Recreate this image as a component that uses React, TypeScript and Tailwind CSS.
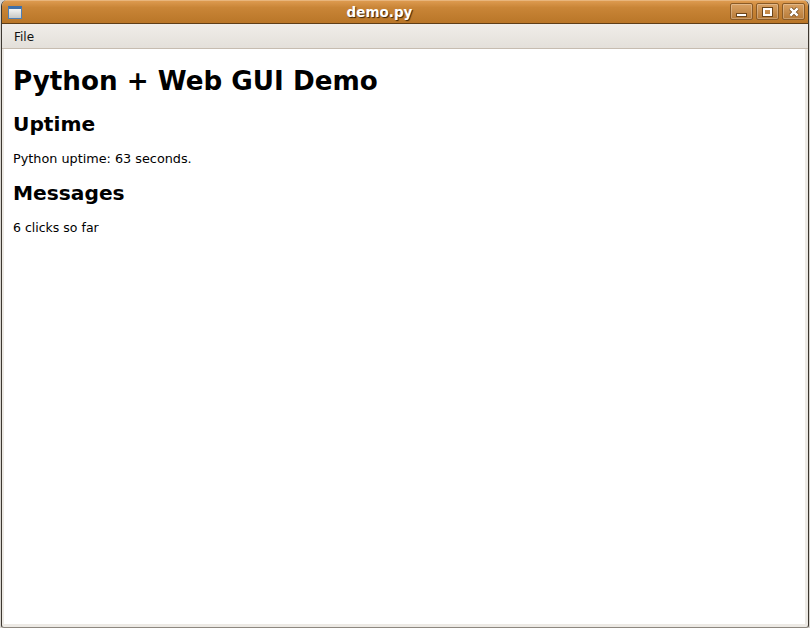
export default function App() {
  return (
    <div className="w-[810px] h-[628px] overflow-hidden bg-[#d8d5d0] px-px font-['DejaVu_Sans',sans-serif] text-black">
      <div className="h-full flex flex-col bg-[#edeae5] border-x border-b border-l-[#3c3730] border-r-[#3c3730] border-b-[#8d8880] rounded-t-[6px] rounded-b-[3px] overflow-hidden">
        <div className="h-[24px] shrink-0 flex items-center border-b border-[#5f3e18] bg-[linear-gradient(#dd9a4f,#c98537_30%,#b97628)] border-t border-t-[#e8b57c]">
          <div className="ml-[6px] w-[14px] h-[13px] border border-[#4f7fb5] border-t-[3px] border-t-[#3f6fa8] bg-[linear-gradient(#f4f4f2,#c8c8c4)]" />
          <div className="flex-1 text-center text-[13.5px] font-bold text-white [text-shadow:1px_1px_1px_#3a2408] pl-[7px]">demo.py</div>
          <div className="flex gap-[3px] mr-[3px] -mt-px">
            <WinBtn><div className="w-[9px] h-[2px] mt-[7px] bg-white outline outline-1 outline-[#6b451b]" /></WinBtn>
            <WinBtn><div className="w-[9px] h-[8px] border-2 border-white outline outline-1 outline-[#6b451b]" /></WinBtn>
            <WinBtn>
              <svg width="10" height="10" viewBox="0 0 11 11">
                <path d="M1.5 1.5L9.5 9.5M9.5 1.5L1.5 9.5" stroke="#6b451b" strokeWidth="4.4" />
                <path d="M1.5 1.5L9.5 9.5M9.5 1.5L1.5 9.5" stroke="#fff" strokeWidth="2.8" />
              </svg>
            </WinBtn>
          </div>
        </div>
        <div className="h-[25px] shrink-0 flex items-center pl-[12px] pt-[1px] text-[12px] border-b border-[#c6bcb0] bg-[linear-gradient(#f0ede9,#e4e0da)] text-[#111]">File</div>
        <div className="flex-1 ml-[2px] mr-[3px] bg-white pl-[9px]">
          <h1 className="text-[26.2px] font-bold leading-[30px] mt-[17px] mb-[16px]">Python + Web GUI Demo</h1>
          <h2 className="text-[20.2px] font-bold leading-[24px] mb-[15px]">Uptime</h2>
          <p className="text-[12.8px] leading-[15px] mb-[15px]">Python uptime: 63 seconds.</p>
          <h2 className="text-[20.2px] font-bold leading-[24px] mb-[15px]">Messages</h2>
          <p className="text-[12.5px] leading-[15px]">6 clicks so far</p>
        </div>
        <div className="h-[3px] shrink-0" />
      </div>
    </div>
  );
}

function WinBtn({ children }: { children: React.ReactNode }) {
  return (
    <div className="w-[23px] h-[17px] flex items-center justify-center rounded-[2px] border border-[#8a5a26] bg-[linear-gradient(#d9a163,#b67a38)] shadow-[inset_0_0_0_1px_rgba(255,255,255,0.25)]">
      {children}
    </div>
  );
}
